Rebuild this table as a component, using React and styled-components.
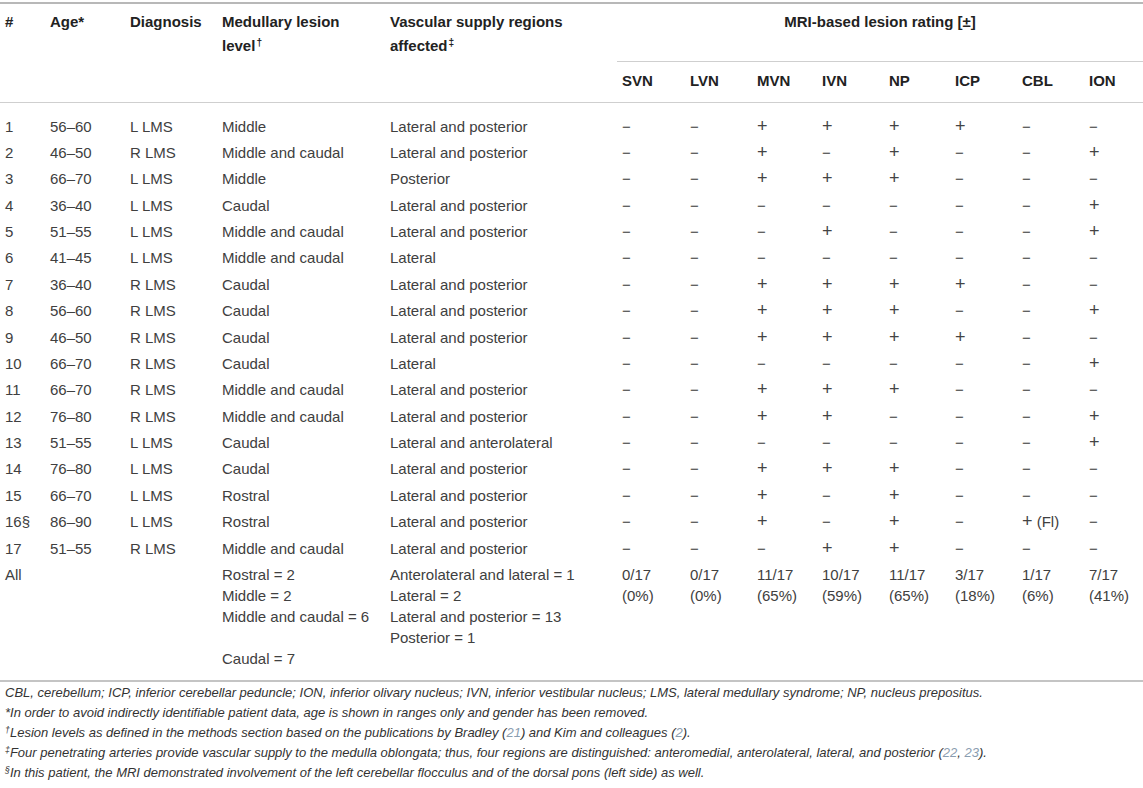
import React from "react";
import styled, { createGlobalStyle } from "styled-components";

const GlobalStyle = createGlobalStyle`
  body {
    margin: 0;
    background: #fff;
    font-family: "Liberation Sans", Arial, Helvetica, sans-serif;
    color: #333;
  }
`;

const Page = styled.div`
  width: 1143px;
  padding-top: 2px;
`;

const Table = styled.table`
  width: 100%;
  border-collapse: collapse;
  table-layout: fixed;
  border-top: 2px solid #b8b8b8;
  border-bottom: 2px solid #c4c4c4;
  font-size: 15px;
`;

const HeadCell = styled.th`
  text-align: ${(p) => (p.$center ? "center" : "left")};
  vertical-align: top;
  font-weight: bold;
  color: #222;
  line-height: 24px;
  padding: 6px 5px 27px;
  border-bottom: 1px solid #cfcfcf;
`;

const SubHeadCell = styled.th`
  text-align: left;
  font-weight: bold;
  color: #222;
  line-height: 24px;
  padding: 7px 5px 9px;
  border-bottom: 1px solid #cfcfcf;
`;

const Sup = styled.span`
  font-size: 0.68em;
  line-height: 0;
  position: relative;
  top: -0.45em;
  margin-left: ${(p) => (p.$gap ? "1px" : "0")};
`;

const Row = styled.tr`
  &:first-child td {
    padding-top: 12.5px;
  }
  &:last-child td {
    padding-bottom: 11px;
  }
`;

const Cell = styled.td`
  vertical-align: top;
  line-height: 21px;
  padding: 2.7px 5px;
  color: #404040;
  white-space: nowrap;
`;

const Mark = styled.span`
  font-size: ${(p) => (p.$plus ? "18px" : "15px")};
  color: #444;
`;

const Notes = styled.div`
  padding: 1px 5px 0;
  font-size: 13px;
  font-style: italic;
  line-height: 20px;
  color: #333;
  white-space: nowrap;
`;

const Ref = styled.span`
  color: #8a9db0;
`;

const widths = [45, 80, 92, 168, 232, 68, 67, 65, 67, 66, 67, 67, 59];

const ratings = ["SVN", "LVN", "MVN", "IVN", "NP", "ICP", "CBL", "ION"];

const rows = [
  ["1", "56–60", "L LMS", "Middle", "Lateral and posterior", "--++++--"],
  ["2", "46–50", "R LMS", "Middle and caudal", "Lateral and posterior", "--+-+--+"],
  ["3", "66–70", "L LMS", "Middle", "Posterior", "--+++---"],
  ["4", "36–40", "L LMS", "Caudal", "Lateral and posterior", "-------+"],
  ["5", "51–55", "L LMS", "Middle and caudal", "Lateral and posterior", "---+---+"],
  ["6", "41–45", "L LMS", "Middle and caudal", "Lateral", "--------"],
  ["7", "36–40", "R LMS", "Caudal", "Lateral and posterior", "--++++--"],
  ["8", "56–60", "R LMS", "Caudal", "Lateral and posterior", "--+++--+"],
  ["9", "46–50", "R LMS", "Caudal", "Lateral and posterior", "--++++--"],
  ["10", "66–70", "R LMS", "Caudal", "Lateral", "-------+"],
  ["11", "66–70", "R LMS", "Middle and caudal", "Lateral and posterior", "--+++---"],
  ["12", "76–80", "R LMS", "Middle and caudal", "Lateral and posterior", "--++---+"],
  ["13", "51–55", "L LMS", "Caudal", "Lateral and anterolateral", "-------+"],
  ["14", "76–80", "L LMS", "Caudal", "Lateral and posterior", "--+++---"],
  ["15", "66–70", "L LMS", "Rostral", "Lateral and posterior", "--+-+---"],
  ["16§", "86–90", "L LMS", "Rostral", "Lateral and posterior", "--+-+-F-"],
  ["17", "51–55", "R LMS", "Middle and caudal", "Lateral and posterior", "---++---"],
];

const totals = [
  ["0/17", "(0%)"],
  ["0/17", "(0%)"],
  ["11/17", "(65%)"],
  ["10/17", "(59%)"],
  ["11/17", "(65%)"],
  ["3/17", "(18%)"],
  ["1/17", "(6%)"],
  ["7/17", "(41%)"],
];

const mark = (c) => {
  if (c === "-") return <Mark>{"\u2212"}</Mark>;
  return (
    <>
      <Mark $plus>+</Mark>
      {c === "F" && " (Fl)"}
    </>
  );
};

const Lines = ({ items }) =>
  items.map((t, i) => (
    <React.Fragment key={i}>
      {i > 0 && <br />}
      {t || "\u00a0"}
    </React.Fragment>
  ));

export default function App() {
  return (
    <Page>
      <GlobalStyle />
      <Table>
        <colgroup>
          {widths.map((w, i) => (
            <col key={i} style={{ width: w }} />
          ))}
        </colgroup>
        <thead>
          <tr>
            <HeadCell rowSpan={2}>#</HeadCell>
            <HeadCell rowSpan={2}>Age*</HeadCell>
            <HeadCell rowSpan={2}>Diagnosis</HeadCell>
            <HeadCell rowSpan={2}>
              Medullary lesion level<Sup $gap>†</Sup>
            </HeadCell>
            <HeadCell rowSpan={2}>
              Vascular supply regions affected<Sup $gap>‡</Sup>
            </HeadCell>
            <HeadCell colSpan={8} $center>
              MRI-based lesion rating [±]
            </HeadCell>
          </tr>
          <tr>
            {ratings.map((r) => (
              <SubHeadCell key={r}>{r}</SubHeadCell>
            ))}
          </tr>
        </thead>
        <tbody>
          {rows.map((r) => (
            <Row key={r[0]}>
              <Cell>{r[0]}</Cell>
              <Cell>{r[1]}</Cell>
              <Cell>{r[2]}</Cell>
              <Cell>{r[3]}</Cell>
              <Cell>{r[4]}</Cell>
              {r[5].split("").map((c, i) => (
                <Cell key={i}>{mark(c)}</Cell>
              ))}
            </Row>
          ))}
          <Row>
            <Cell>All</Cell>
            <Cell />
            <Cell />
            <Cell>
              <Lines items={["Rostral = 2", "Middle = 2", "Middle and caudal = 6", "", "Caudal = 7"]} />
            </Cell>
            <Cell>
              <Lines
                items={[
                  "Anterolateral and lateral = 1",
                  "Lateral = 2",
                  "Lateral and posterior = 13",
                  "Posterior = 1",
                ]}
              />
            </Cell>
            {totals.map((t, i) => (
              <Cell key={i}>
                <Lines items={t} />
              </Cell>
            ))}
          </Row>
        </tbody>
      </Table>
      <Notes>
        <div>
          CBL, cerebellum; ICP, inferior cerebellar peduncle; ION, inferior olivary nucleus; IVN, inferior
          vestibular nucleus; LMS, lateral medullary syndrome; NP, nucleus prepositus.
        </div>
        <div>
          *In order to avoid indirectly identifiable patient data, age is shown in ranges only and gender has
          been removed.
        </div>
        <div>
          <Sup>†</Sup>Lesion levels as defined in the methods section based on the publications by Bradley (
          <Ref>21</Ref>) and Kim and colleagues (<Ref>2</Ref>).
        </div>
        <div>
          <Sup>‡</Sup>Four penetrating arteries provide vascular supply to the medulla oblongata; thus, four
          regions are distinguished: anteromedial, anterolateral, lateral, and posterior (<Ref>22</Ref>,{" "}
          <Ref>23</Ref>).
        </div>
        <div>
          <Sup>§</Sup>In this patient, the MRI demonstrated involvement of the left cerebellar flocculus and of
          the dorsal pons (left side) as well.
        </div>
      </Notes>
    </Page>
  );
}
